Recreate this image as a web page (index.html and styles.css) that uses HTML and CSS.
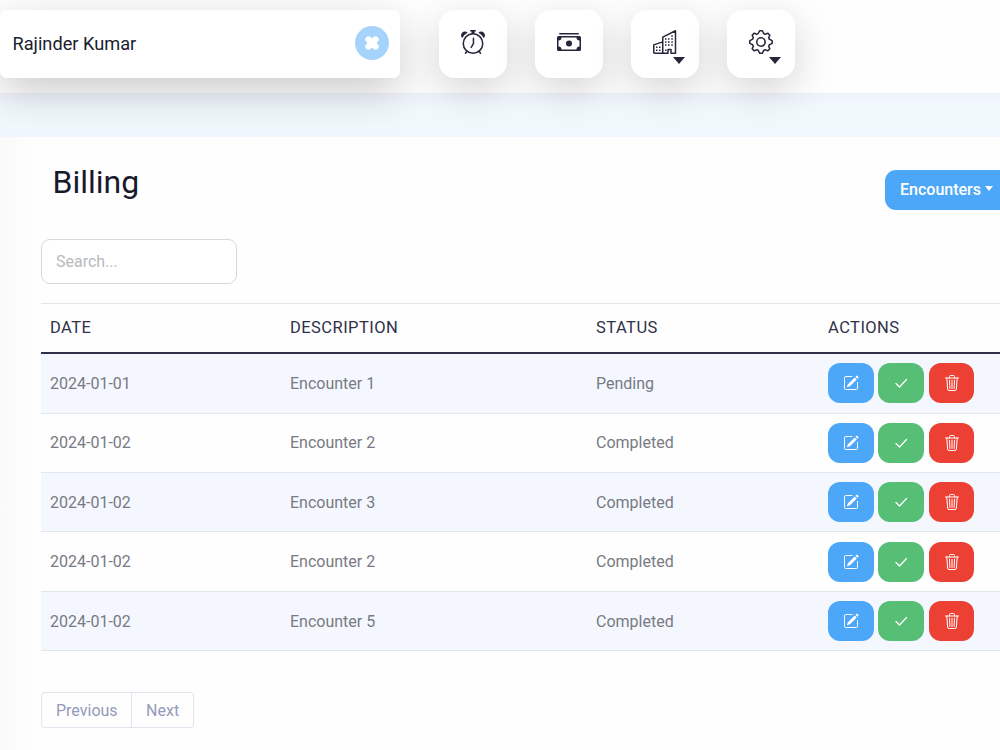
FILE: index.html
```html
<!DOCTYPE html>
<html lang="en">
<head>
<meta charset="utf-8">
<title>Billing</title>
<link rel="stylesheet" href="styles.css">
</head>
<body>
<svg class="sprite" aria-hidden="true">
  <symbol id="edit" viewBox="0 0 16 16"><path d="M15.5 1.94a.5.5 0 0 1 0 .7L14.46 3.7l-2-2L13.5.65a.5.5 0 0 1 .7 0zM13.75 4.4l-2-2-6.81 6.81-.12.2-.81 2.41a.25.25 0 0 0 .32.32l2.41-.81.2-.12z"/><path d="M1.5 2.5v11a1 1 0 0 0 1 1h11a1 1 0 0 0 1-1v-6M9 1.5H2.5a1 1 0 0 0-1 1" fill="none" stroke="currentColor" stroke-linecap="round"/></symbol>
  <symbol id="check" viewBox="0 0 16 16"><path d="M3 8.5l3.500 3.500L13.500 4.500" fill="none" stroke="currentColor" stroke-width="1.250" stroke-linecap="round" stroke-linejoin="round"/></symbol>
  <symbol id="trash" viewBox="0 0 16 16"><path d="M1.5 3h13M5.5 3V1.500a1 1 0 0 1 1-1h3a1 1 0 0 1 1 1V3M2.800 3l.8 11a1.500 1.500 0 0 0 1.500 1.500h5.800a1.500 1.500 0 0 0 1.500-1.500l.8-11M5.500 5.200l.4 8.300M8 5.200v8.300M10.500 5.200l-.4 8.300" fill="none" stroke="currentColor" stroke-linecap="round"/></symbol>
</svg>
<header class="topbar">
  <div class="patient">
    <span>Rajinder Kumar</span>
    <button class="clear" aria-label="Clear"><svg viewBox="0 0 16 16"><path d="M4.500 4.500l7 7M11.500 4.500l-7 7" stroke="#fff" stroke-width="6.300" stroke-linecap="round"/></svg></button>
  </div>
  <nav class="tools">
    <button class="tool" aria-label="Reminders">
      <svg viewBox="0 0 16 16"><g fill="none" stroke="currentColor" stroke-linecap="round"><circle cx="8" cy="9" r="6.5"/><path d="M8.3 5.5V9l-1.5 2.6M3.9 14.3l-.9 1.2M12.1 14.3l.9 1.2"/></g><path d="M6.5 0h3a.5.5 0 0 1 0 1H9v1.600H7V1h-.5a.5.5 0 0 1 0-1zM.86 5.390A2.500 2.500 0 1 1 4.390 1.860 8 8 0 0 0 .86 5.390zM11.610 1.860a2.500 2.500 0 1 1 3.530 3.530 8 8 0 0 0-3.530-3.530z"/></svg>
    </button>
    <button class="tool" aria-label="Billing">
      <svg viewBox="0 0 16 16"><path d="M1.500 2h13v1h-13z"/><path fill-rule="evenodd" d="M1 4h14a1 1 0 0 1 1 1v8a1 1 0 0 1-1 1H1a1 1 0 0 1-1-1V5a1 1 0 0 1 1-1zm2 1a2 2 0 0 1-2 2v4a2 2 0 0 1 2 2h10a2 2 0 0 1 2-2V7a2 2 0 0 1-2-2z"/><circle cx="8" cy="9" r="2"/></svg>
    </button>
    <button class="tool" aria-label="Facility">
      <svg viewBox="0 0 16 16"><path d="M.5 15.500V9.900l6-2V4.800l8.500-4.300v15h-3V13H10v2.500H.5M6.500 8v7.500" fill="none" stroke="currentColor" stroke-linejoin="round"/><path d="M8.500 5.500v6M10.500 5.500v6M12.700 3.500v8M2.500 11v3M4.500 11v3M8.500 13v1" fill="none" stroke="currentColor" stroke-dasharray="1 1"/></svg>
      <i class="arrow"></i>
    </button>
    <button class="tool" aria-label="Settings">
      <svg viewBox="0 0 16 16"><path d="M14.750 6.700L15.500 7.200V8.800L14.750 9.300Q13 9.700 13.200 11.100L13.900 12.500 12.500 13.900 11.100 13.200Q9.700 13 9.300 14.750L8.800 15.500H7.200L6.700 14.750Q6.300 13 4.900 13.200L3.500 13.900 2.100 12.500 2.800 11.100Q3 9.700 1.250 9.300L.5 8.800V7.200L1.250 6.700Q3 6.300 2.800 4.900L2.100 3.500 3.500 2.100 4.900 2.800Q6.300 3 6.700 1.250L7.200.5H8.800L9.300 1.250Q9.700 3 11.100 2.800L12.500 2.100 13.900 3.500 13.200 4.900Q13 6.300 14.750 6.700Z" fill="none" stroke="currentColor" stroke-linejoin="round"/><circle cx="8" cy="8" r="2.800" fill="none" stroke="currentColor"/></svg>
      <i class="arrow"></i>
    </button>
  </nav>
</header>
<div class="strip"></div>
<main class="content">
  <div class="heading"><h1>Billing</h1><button class="encounters">Encounters<i class="caret"></i></button></div>
  <input class="search" placeholder="Search...">
  <table class="bills">
    <colgroup><col class="date"><col class="description"><col class="status"><col></colgroup>
    <thead><tr><th>DATE</th><th>DESCRIPTION</th><th>STATUS</th><th>ACTIONS</th></tr></thead>
    <tbody>
      <tr><td>2024-01-01</td><td>Encounter 1</td><td>Pending</td><td><div class="actions"><button class="edit"><svg><use href="#edit"/></svg></button><button class="done"><svg><use href="#check"/></svg></button><button class="delete"><svg><use href="#trash"/></svg></button></div></td></tr>
      <tr><td>2024-01-02</td><td>Encounter 2</td><td>Completed</td><td><div class="actions"><button class="edit"><svg><use href="#edit"/></svg></button><button class="done"><svg><use href="#check"/></svg></button><button class="delete"><svg><use href="#trash"/></svg></button></div></td></tr>
      <tr><td>2024-01-02</td><td>Encounter 3</td><td>Completed</td><td><div class="actions"><button class="edit"><svg><use href="#edit"/></svg></button><button class="done"><svg><use href="#check"/></svg></button><button class="delete"><svg><use href="#trash"/></svg></button></div></td></tr>
      <tr><td>2024-01-02</td><td>Encounter 2</td><td>Completed</td><td><div class="actions"><button class="edit"><svg><use href="#edit"/></svg></button><button class="done"><svg><use href="#check"/></svg></button><button class="delete"><svg><use href="#trash"/></svg></button></div></td></tr>
      <tr><td>2024-01-02</td><td>Encounter 5</td><td>Completed</td><td><div class="actions"><button class="edit"><svg><use href="#edit"/></svg></button><button class="done"><svg><use href="#check"/></svg></button><button class="delete"><svg><use href="#trash"/></svg></button></div></td></tr>
    </tbody>
  </table>
  <div class="pager"><button>Previous</button><button>Next</button></div>
</main>
</body>
</html>
```
FILE: styles.css
```css
* { box-sizing: border-box; }
html, body { height: 100%; }
body { margin: 0; overflow: hidden; background: #fefefe; font-family: Roboto, sans-serif; font-size: 16px; color: #1b1d30; }
button { font: inherit; border: 0; padding: 0; }
.sprite { display: none; }
.topbar { display: flex; height: 92.500px; padding-top: 9.500px; background: #fefefe; }
.patient { display: flex; align-items: center; justify-content: space-between; width: 400px; height: 68px; padding: 0 11px 1px 12.500px; background: #fff; border-radius: 7px; font-size: 18.200px; box-shadow: 0 14px 44px rgba(0,0,0,.2); }
.clear { display: grid; place-items: center; width: 34px; height: 34px; border-radius: 50%; background: #a6d3fb; }
.clear svg { width: 16px; height: 16px; }
.tools { display: flex; gap: 28px; margin-left: 39px; }
.tool { position: relative; z-index: 1; display: grid; place-items: center; width: 68.300px; height: 68px; border-radius: 16px; background: #fff; color: #25263a; }
.tools { gap: 27.700px; }
.tool::before { content: ""; position: absolute; z-index: -1; inset: 0; border-radius: 16px; background: #fff; }
.tool { box-shadow: 0 12px 40px rgba(0,0,0,.17); }
.tool svg { width: 24px; height: 24px; fill: currentColor; margin-top: -3px; }
.arrow { position: absolute; left: 42px; top: 47.500px; border: 6px solid transparent; border-top: 7px solid #25263a; border-bottom: 0; }
.strip { height: 44.500px; background: linear-gradient(#f0f2fc, #f0fafd 35%, #f0fafd 70%, #f0f6fd); }
.content { position: relative; height: 613px; padding: 33px 0 0 41px; background: linear-gradient(90deg, #fafafa 0, #fbfbfb 12px, #fefefe 34px); }
.strip { position: relative; z-index: -1; }
.heading { display: flex; justify-content: space-between; height: 69px; }
h1 { margin: -7px 0 0 11.500px; font-size: 32px; line-height: 38px; font-weight: 400; color: #181a2c; }
.encounters { width: 115px; height: 40px; padding: 0 0 1px 15px; border-radius: 11px 0 0 11px; background: #4ca7f8; color: #fff; font-weight: 500; text-align: left; white-space: nowrap; }
.caret { display: inline-block; margin-left: 4px; vertical-align: 4px; border: 4.500px solid transparent; border-top: 5px solid #fff; border-bottom: 0; }
.search { display: block; width: 196px; height: 45px; padding: 0 14px; border: 1px solid #d5d9dc; border-radius: 9px; background: #fff; font: inherit; }
.search::placeholder { color: #b8babc; }
.bills { width: 959px; margin-top: 19px; border-collapse: separate; border-spacing: 0; table-layout: fixed; }
.date { width: 240px; }
.description { width: 306px; }
.status { width: 232px; }
th, td { padding: 0 9px; text-align: left; font-weight: 400; }
th { height: 51.300px; padding-bottom: 2px; border-top: 1px solid #e4e5e7; border-bottom: 2px solid #303149; color: #303149; font-size: 16.500px; letter-spacing: .45px; }
td { height: 59.400px; border-bottom: 1px solid #dee7ec; color: #777a83; }
tbody tr:nth-child(odd) { background: #f4f8fe; }
.actions { display: flex; gap: 4.800px; }
.actions button { display: grid; place-items: center; width: 45.600px; height: 40px; border-radius: 12px; color: #fff; }
.actions svg { width: 16px; height: 16px; fill: currentColor; }
.actions .edit { background: #4ca7f8; }
.actions .done { background: #57be76; }
.actions .delete { background: #ec4035; }
.pager { display: flex; width: 153px; height: 36px; margin-top: 41px; border: 1px solid #e0e4ec; border-radius: 4px; }
.pager button { padding: 1px 13.500px 0 14px; background: transparent; color: #949ab8; }
.pager button + button { border-left: 1px solid #e0e4ec; }
```
